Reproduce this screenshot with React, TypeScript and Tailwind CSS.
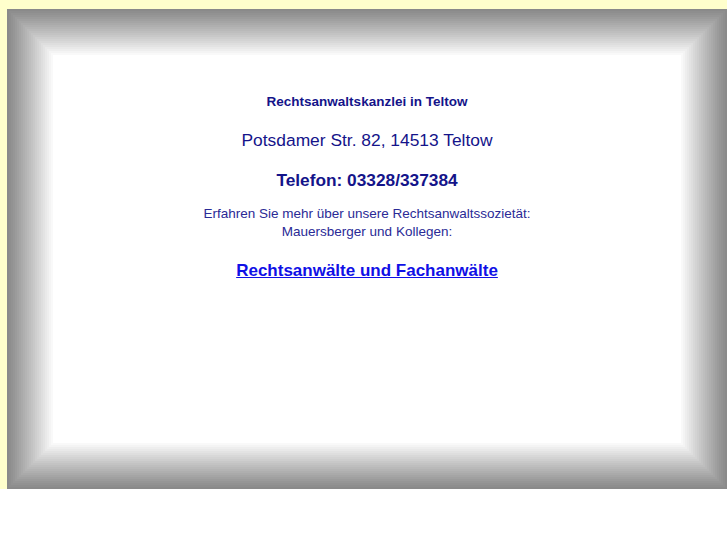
import React from "react";

const STEPS = 24;

function Bevel({ level, children }: { level: number; children: React.ReactNode }) {
  if (level >= STEPS) return <>{children}</>;
  const t = level / (STEPS - 1);
  const v = Math.round(0x8a + (0xff - 0x8a) * Math.pow(t, 1.1));
  const c = `rgb(${v},${v},${v})`;
  return (
    <div className="flex flex-1 flex-col border-2" style={{ borderColor: c }}>
      <Bevel level={level + 1}>{children}</Bevel>
    </div>
  );
}

export default function App() {
  return (
    <div className="w-full bg-white" style={{ fontFamily: '"Liberation Sans", Arial, sans-serif' }}>
      <div className="flex h-[489px] w-full flex-col bg-[#ffffcc] pl-[7px] pt-[9px]">
        <div className="flex flex-1 flex-col">
          <Bevel level={0}>
            <div className="flex flex-1 flex-col items-center bg-white pt-[37px] text-center text-[#14148a]">
              <p className="text-[13.5px] font-bold leading-[16px]">Rechtsanwaltskanzlei in Teltow</p>
              <p className="mt-[20px] text-[17.4px] leading-[20px]">Potsdamer Str. 82, 14513 Teltow</p>
              <p className="mt-[20px] text-[17.3px] font-bold leading-[20px]">Telefon: 03328/337384</p>
              <p className="mt-[15px] text-[13.5px] leading-[18px] text-[#2a2a96]">
                Erfahren Sie mehr über unsere Rechtsanwaltssozietät:
                <br />
                Mauersberger und Kollegen:
              </p>
              <a href="#" className="mt-[20px] text-[17px] font-bold leading-[20px] text-[#1010e6] underline">
                Rechtsanwälte und Fachanwälte
              </a>
            </div>
          </Bevel>
        </div>
      </div>
      <div className="h-[56px]" />
    </div>
  );
}
